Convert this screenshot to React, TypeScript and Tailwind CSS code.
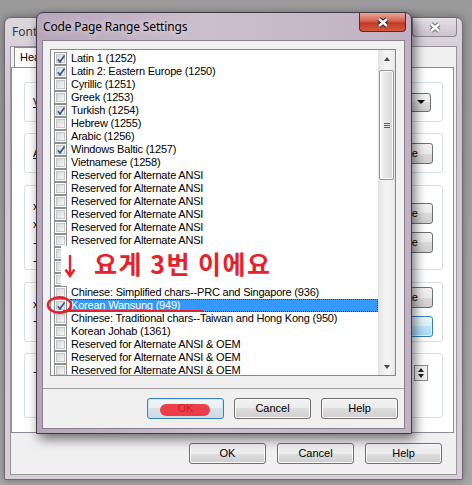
import React from 'react';

const ROWS: [string, boolean][] = [
  ['Latin 1 (1252)', true],
  ['Latin 2: Eastern Europe (1250)', true],
  ['Cyrillic (1251)', false],
  ['Greek (1253)', false],
  ['Turkish (1254)', true],
  ['Hebrew (1255)', false],
  ['Arabic (1256)', false],
  ['Windows Baltic (1257)', true],
  ['Vietnamese (1258)', false],
  ['Reserved for Alternate ANSI', false],
  ['Reserved for Alternate ANSI', false],
  ['Reserved for Alternate ANSI', false],
  ['Reserved for Alternate ANSI', false],
  ['Reserved for Alternate ANSI', false],
  ['Reserved for Alternate ANSI', false],
  ['Reserved for Alternate ANSI', false],
  ['Thai (874)', false],
  ['Japanese, JIS/Japan (932)', false],
  ['Chinese: Simplified chars--PRC and Singapore (936)', false],
  ['Korean Wansung (949)', true],
  ['Chinese: Traditional chars--Taiwan and Hong Kong (950)', false],
  ['Korean Johab (1361)', false],
  ['Reserved for Alternate ANSI & OEM', false],
  ['Reserved for Alternate ANSI & OEM', false],
  ['Reserved for Alternate ANSI & OEM', false],
  ['Reserved for Alternate ANSI & OEM', false],
];

const SELECTED = 19;

function CheckBox({ on }: { on: boolean }) {
  return (
    <div className="relative ml-[3px] w-[13px] h-[13px] shrink-0 border border-[#8e8f8f] bg-white p-[1px]">
      <div className="w-full h-full border border-[#c4c6c9] bg-[linear-gradient(135deg,#d6d6d6,#f7f7f7)]" />
      {on && (
        <svg className="absolute left-[1px] top-[1px]" width="10" height="10" viewBox="0 0 10 10">
          <path d="M1.8 5.2 L4 7.8 L8.6 1.6" fill="none" stroke="#3b4f8f" strokeWidth="1.7" />
        </svg>
      )}
    </div>
  );
}

function CloseX({ dim }: { dim?: boolean }) {
  return (
    <svg width="14" height="11" viewBox="0 0 14 11">
      <path d="M3 2 L11 9 M11 2 L3 9" stroke={dim ? '#6f6a74' : '#3a2020'} strokeWidth="4.4" />
      <path d="M3 2 L11 9 M11 2 L3 9" stroke="#ffffff" strokeWidth="2.4" />
    </svg>
  );
}

function WinButton({ label, def }: { label: string; def?: boolean }) {
  return (
    <div
      className={
        def
          ? 'w-[77px] h-[21px] rounded-[3px] border border-[#3c7fb1] bg-[linear-gradient(#f3f6f8,#e8eef2_50%,#d8e2e8_50%,#cfdbe2)] shadow-[inset_0_0_0_1px_#c4e5f6] flex items-center justify-center text-[11px] text-black'
          : 'w-[77px] h-[21px] rounded-[3px] border border-[#707070] bg-[linear-gradient(#f2f2f2,#ebebeb_50%,#dddddd_50%,#cfcfcf)] shadow-[inset_0_0_0_1px_#fbfbfb] flex items-center justify-center text-[11px] text-black'
      }
    >
      {label}
    </div>
  );
}

function SmallButton({ blue }: { blue?: boolean }) {
  return (
    <div
      className={
        blue
          ? 'w-[62px] h-[21px] rounded-[3px] border border-[#3c7fb1] bg-[linear-gradient(#eaf6fd,#d9f0fc_50%,#bee6fd_50%,#a7d9f5)] shadow-[inset_0_0_0_1px_#e4f4fd]'
          : 'w-[62px] h-[21px] rounded-[3px] border border-[#707070] bg-[linear-gradient(#f2f2f2,#ebebeb_50%,#dddddd_50%,#cfcfcf)] flex items-center justify-end pr-[14px] text-[11px] text-black'
      }
    >
      {blue ? null : 'Change'}
    </div>
  );
}

function Scrollbar() {
  return (
    <div className="w-[17px] flex flex-col bg-[linear-gradient(90deg,#e2e2e2,#f3f3f3_40%,#f3f3f3_70%,#e6e6e6)]">
      <div className="h-[17px] flex items-center justify-center">
        <div className="w-0 h-0 border-x-[3.5px] border-x-transparent border-b-[4px] border-b-[#4a4a4a]" />
      </div>
      <div className="mt-[3px] mx-[1px] h-[110px] rounded-[2px] border border-[#979797] bg-[linear-gradient(90deg,#f4f4f4,#e6e6e6_50%,#d6d6d6)] shadow-[inset_0_0_0_1px_#fafafa] flex flex-col items-center justify-center gap-[1px]">
        <div className="w-[6px] h-[1px] bg-[#5c5c5c]" />
        <div className="w-[6px] h-[1px] bg-[#5c5c5c]" />
        <div className="w-[6px] h-[1px] bg-[#5c5c5c]" />
      </div>
      <div className="flex-1" />
      <div className="h-[17px] flex items-center justify-center">
        <div className="w-0 h-0 border-x-[3.5px] border-x-transparent border-t-[4px] border-t-[#4a4a4a]" />
      </div>
    </div>
  );
}

function CodePageList() {
  return (
    <div className="w-[346px] h-[327px] border border-[#828790] bg-white flex overflow-hidden">
      <div className="flex-1 pt-[2px] overflow-hidden">
        {ROWS.map(([label, on], i) => (
          <div key={i} className="h-[13px] flex items-center">
            <CheckBox on={on} />
            <span
              className={
                i === SELECTED
                  ? 'ml-[3px] flex-1 h-[13px] pl-[1px] leading-[12px] whitespace-nowrap text-[11px] tracking-[-0.2px] text-white bg-[#3399ff] outline outline-1 outline-dotted outline-[#5a3a10] -outline-offset-1'
                  : 'ml-[3px] flex-1 h-[13px] pl-[1px] leading-[12px] whitespace-nowrap text-[11px] tracking-[-0.2px] text-black'
              }
            >
              {label}
            </span>
          </div>
        ))}
      </div>
      <Scrollbar />
    </div>
  );
}

function GroupBox({ className, children }: { className: string; children?: React.ReactNode }) {
  return (
    <div className={`ml-[12px] mr-[10px] rounded-[3px] border border-[#d5dfe5] relative flex ${className}`}>
      {children}
    </div>
  );
}

function BackWindow() {
  return (
    <div className="absolute left-[4px] top-[17px] w-[459px] h-[463px] flex flex-col rounded-t-[7px] border border-[#6d6872] bg-[linear-gradient(#dcd6dd,#cdc5cf_20%,#d6cfd8)] shadow-[0_0_8px_rgba(0,0,0,0.35)]">
      <div className="relative h-[28px] flex items-center pl-[7px]">
        <span className="font-['Noto_Sans',sans-serif] text-[12px] text-[#3b3b3b]">Font Properties</span>
        <div className="absolute right-[5px] top-0 w-[45px] h-[19px] rounded-b-[4px] border border-t-0 border-[#8c8490] bg-[linear-gradient(#e6e0e7,#cbc2cd)] flex items-center justify-center">
          <CloseX dim />
        </div>
      </div>
      <div className="flex-1 mx-[5px] mb-[4px] flex flex-col bg-[#f0f0f0] border border-[#9b93a0]">
        <div className="h-[20px] flex">
          <div className="ml-[3px] h-[20px] px-[5px] border border-b-0 border-[#898c95] bg-white text-[11px] leading-[19px] text-black">
            Header
          </div>
        </div>
        <div className="h-[366px] mr-[2px] bg-white border border-[#898c95] pt-[14px] flex flex-col text-[11px] text-black">
          <GroupBox className="h-[40px] items-center justify-between pl-[8px] pr-[11px]">
            <span>
              <span className="underline">V</span>ertical
            </span>
            <div className="w-[90px] h-[19px] rounded-[3px] border border-[#707070] bg-[linear-gradient(#f2f2f2,#ebebeb_50%,#dddddd_50%,#cfcfcf)] flex items-center justify-end pr-[5px]">
              <div className="w-0 h-0 border-x-[4px] border-x-transparent border-t-[4px] border-t-[#111]" />
            </div>
          </GroupBox>
          <GroupBox className="mt-[11px] h-[40px] items-center justify-between pl-[8px] pr-[9px]">
            <span>
              <span className="underline">A</span>lignment
            </span>
            <SmallButton />
          </GroupBox>
          <GroupBox className="mt-[12px] h-[85px] justify-between pl-[8px] pr-[9px]">
            <div className="flex flex-col pt-[11px] leading-[18px]">
              <span>x offset</span>
              <span>x scale</span>
              <span>- min</span>
              <span>- max</span>
            </div>
            <div className="flex flex-col gap-[8px] pt-[17px]">
              <SmallButton />
              <SmallButton />
            </div>
          </GroupBox>
          <GroupBox className="mt-[12px] h-[60px] justify-between pl-[8px] pr-[9px]">
            <div className="flex flex-col pt-[13px] leading-[16px]">
              <span>x origin</span>
              <span>- fixed</span>
            </div>
            <div className="flex flex-col gap-[8px] pt-[4px]">
              <SmallButton />
              <SmallButton blue />
            </div>
          </GroupBox>
          <GroupBox className="mt-[11px] h-[65px] justify-between pl-[8px] pr-[14px]">
            <div className="pt-[9px]">- size</div>
            <div className="pt-[11px]">
              <div className="w-[14px] h-[16px] border border-[#8a8a8a] bg-[#f4f4f4] flex flex-col items-center justify-center gap-[2px]">
                <div className="w-0 h-0 border-x-[3.5px] border-x-transparent border-b-[4px] border-b-[#222]" />
                <div className="w-0 h-0 border-x-[3.5px] border-x-transparent border-t-[4px] border-t-[#222]" />
              </div>
            </div>
          </GroupBox>
        </div>
        <div className="flex justify-end gap-[11px] pr-[14px] pt-[10px]">
          <WinButton label="OK" />
          <WinButton label="Cancel" />
          <WinButton label="Help" />
        </div>
      </div>
    </div>
  );
}

function CodePageDialog() {
  return (
    <div className="absolute left-[36px] top-[12px] w-[376px] h-[422px] flex flex-col rounded-t-[7px] border border-[#3f3a45] bg-[linear-gradient(90deg,#b7a5ba,#cbbfcd_45%,#c0b1c3)] shadow-[3px_5px_12px_rgba(0,0,0,0.55)]">
      <div className="relative h-[27px] flex items-center pl-[6px]">
        <span className="font-['Noto_Sans',sans-serif] text-[12px] tracking-[-0.15px] text-black [text-shadow:0_0_7px_#f4eef5]">
          Code Page Range Settings
        </span>
        <div className="absolute right-[5px] top-0 w-[47px] h-[19px] rounded-b-[4px] border border-t-0 border-[#5a2a22] bg-[linear-gradient(#e7a998,#d7604b_45%,#c23a26_55%,#cf5a3e)] flex items-center justify-center">
          <CloseX />
        </div>
      </div>
      <div className="flex-1 ml-[5px] mr-[6px] mb-[4px] flex flex-col bg-[#f0f0f0] border border-[#8a7f8f]">
        <div className="h-[348px] border-b border-[#a0a0a0] pl-[7px] pt-[8px]">
          <CodePageList />
        </div>
        <div className="flex justify-end gap-[10px] pr-[6px] pt-[9px]">
          <WinButton label="OK" def />
          <WinButton label="Cancel" />
          <WinButton label="Help" />
        </div>
      </div>
    </div>
  );
}

export default function App() {
  return (
    <div className="relative w-[472px] h-[485px] overflow-hidden bg-[linear-gradient(#9a9a9a,#a8a8a8)] font-['Liberation_Sans',Arial,sans-serif]">
      <BackWindow />
      <CodePageDialog />

      {/* hand-drawn annotation */}
      <div className="absolute left-[61px] top-[246px] w-[316px] h-[40px] bg-white" />
      <svg className="absolute left-[63px] top-[254px]" width="14" height="24" viewBox="0 0 14 24">
        <path d="M7 1 V21 M2.5 15.5 L7 22 L11.5 15.5" fill="none" stroke="#e5222c" strokeWidth="2.4" />
      </svg>
      <div className="absolute left-[94px] top-[248px] font-['Noto_Sans_CJK_KR',sans-serif] font-bold text-[25px] tracking-[1.5px] leading-[30px] text-[#e5222c] whitespace-nowrap">
        요게 3번 이에요
      </div>
      <svg className="absolute left-[46px] top-[295px]" width="28" height="20" viewBox="0 0 28 20">
        <ellipse cx="13.5" cy="10" rx="11.5" ry="7.8" fill="none" stroke="#e5222c" strokeWidth="2.6" />
      </svg>
      <div className="absolute left-[63px] top-[310px] w-[140px] h-[2px] bg-[#e5222c]" />
      <div className="absolute left-[160px] top-[404px] w-[50px] h-[12px] rounded-full bg-[#f0222e] opacity-85 blur-[0.6px]" />
    </div>
  );
}
